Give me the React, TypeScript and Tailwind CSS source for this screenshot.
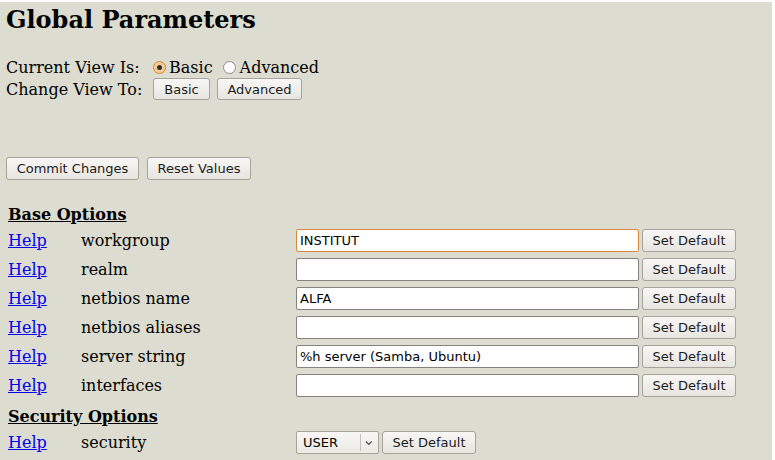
import React from "react";

const btn =
  "h-[22px] rounded-[3px] border border-[#a5a39c] bg-gradient-to-b from-[#f8f7f5] to-[#e7e5e0] font-['DejaVu_Sans'] text-[13px] leading-none text-[#1b1b1b] flex items-center justify-center";

const params = [
  { name: "workgroup", value: "INSTITUT", focus: true },
  { name: "realm", value: "" },
  { name: "netbios name", value: "ALFA" },
  { name: "netbios aliases", value: "" },
  { name: "server string", value: "%h server (Samba, Ubuntu)" },
  { name: "interfaces", value: "" },
];

function Radio({ checked }: { checked?: boolean }) {
  return checked ? (
    <span className="block shrink-0 w-[13px] h-[13px] rounded-full border border-[#d3883a] bg-[#f6cd94] flex items-center justify-center">
      <span className="block w-[5px] h-[5px] rounded-full bg-[#2d2d2d]" />
    </span>
  ) : (
    <span className="block shrink-0 w-[13px] h-[13px] rounded-full border border-[#8f8d87] bg-white" />
  );
}

function Section({ title, tall }: { title: string; tall?: boolean }) {
  return (
    <div className={`${tall ? "h-[28px]" : "h-[27px]"} flex items-end pb-[2px] pl-[2px]`}>
      <span className="font-bold underline leading-[19px]">{title}</span>
    </div>
  );
}

function Help() {
  return <a className="text-[#0000ee] underline cursor-pointer">Help</a>;
}

export default function App() {
  return (
    <div className="bg-white pt-[2px] w-[775px] h-[460px] overflow-hidden">
      <div className="bg-[#dcdcd0] w-[772px] h-[458px] px-[6px] pt-[4px] font-['DejaVu_Serif',serif] text-[16px] text-black">
        <h2 className="text-[24px] font-bold leading-[28px]">Global Parameters</h2>

        <div className="mt-[24px] grid grid-cols-[147px_1fr] h-[19px] leading-[19px] items-center">
          <span>Current View Is:</span>
          <div className="flex items-center">
            <Radio checked />
            <span className="ml-[3px]">Basic</span>
            <span className="ml-[10px]">
              <Radio />
            </span>
            <span className="ml-[4px]">Advanced</span>
          </div>
        </div>
        <div className="grid grid-cols-[147px_1fr] h-[24px] leading-[19px] items-center">
          <span>Change View To:</span>
          <div className="flex gap-[7px]">
            <button className={`${btn} w-[57px]`}>Basic</button>
            <button className={`${btn} w-[85px]`}>Advanced</button>
          </div>
        </div>

        <div className="mt-[56px] flex gap-[8px]">
          <button className={`${btn} h-[23px] w-[133px]`}>Commit Changes</button>
          <button className={`${btn} h-[23px] w-[104px]`}>Reset Values</button>
        </div>

        <div className="mt-[19px]">
          <Section title="Base Options" />
          {params.map((p) => (
            <div
              key={p.name}
              className="h-[29px] grid grid-cols-[73px_215px_auto] items-center pl-[2px] leading-[19px]"
            >
              <Help />
              <span>{p.name}</span>
              <div className="flex items-center gap-[3px]">
                <div
                  className={`w-[343px] h-[23px] rounded-[2px] border bg-white pl-[3px] flex items-center font-['DejaVu_Sans'] text-[13px] text-black ${
                    p.focus ? "border-[#d9883c]" : "border-[#85837e]"
                  }`}
                >
                  {p.value}
                </div>
                <button className={`${btn} h-[23px] w-[94px]`}>Set Default</button>
              </div>
            </div>
          ))}
          <Section title="Security Options" tall />
          <div className="h-[29px] grid grid-cols-[73px_215px_auto] items-center pl-[2px] leading-[19px]">
            <Help />
            <span>security</span>
            <div className="flex items-center gap-[3px]">
              <div className="w-[83px] h-[23px] rounded-[2px] border border-[#a5a39c] bg-gradient-to-b from-[#f8f7f5] to-[#ebe9e4] flex items-center font-['DejaVu_Sans'] text-[13px] text-black">
                <span className="pl-[6px] w-[64px]">USER</span>
                <span className="h-[17px] w-px bg-[#c4c2bc]" />
                <svg width="18" height="10" viewBox="0 0 18 10">
                  <path d="M6 3.5 L9 6.5 L12 3.5" fill="none" stroke="#555" strokeWidth="1.3" />
                </svg>
              </div>
              <button className={`${btn} h-[23px] w-[94px]`}>Set Default</button>
            </div>
          </div>
        </div>
      </div>
    </div>
  );
}
